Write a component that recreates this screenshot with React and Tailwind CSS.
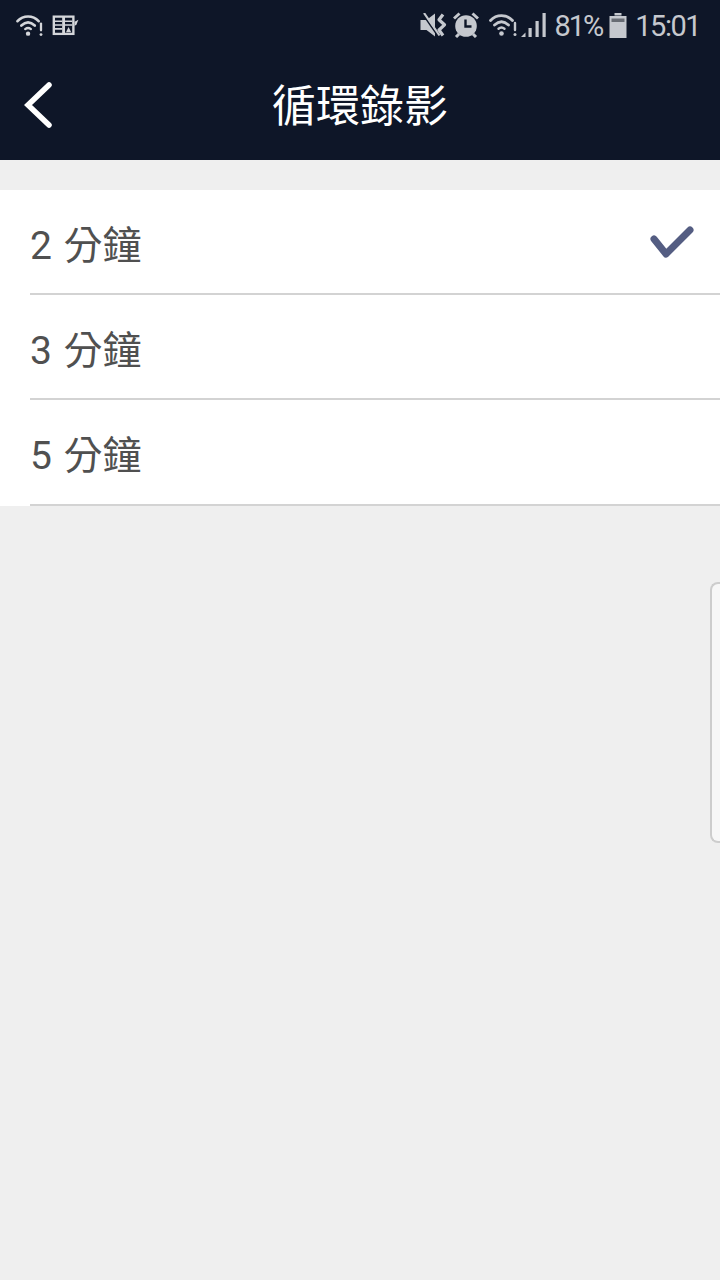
const cjk = { fontFamily: '"Roboto", "Noto Sans CJK TC", sans-serif' }

const options = [
  { label: '2 分鐘', checked: true },
  { label: '3 分鐘' },
  { label: '5 分鐘' },
]

function WifiAlert({ className }) {
  return (
    <svg className={className} viewBox="0 0 28 24" fill="none" stroke="currentColor" strokeLinecap="round">
      <path d="M1.5 7.5C7.5 1 17.5 1 23.5 7.5" strokeWidth="2.8" />
      <path d="M5.5 12C10 7.8 15 7.8 19.5 12" strokeWidth="2.8" />
      <path d="M9.5 15.8C11.5 14.2 13.5 14.2 15.5 15.8" strokeWidth="2.4" />
      <circle cx="12.5" cy="20.5" r="2.3" fill="currentColor" stroke="none" />
      <path d="M26 10V17" strokeWidth="2.4" />
      <circle cx="26" cy="21.5" r="1.5" fill="currentColor" stroke="none" />
    </svg>
  )
}

function NewsIcon({ className }) {
  return (
    <svg className={className} viewBox="0 0 28 22" fill="none" stroke="currentColor">
      <rect x="0.5" y="0.5" width="23" height="20.5" fill="currentColor" stroke="none" />
      <path d="M3 3H10.5V18.5H3ZM13.5 3H21V18.5H13.5Z" fill="#0e1628" stroke="none" />
      <path d="M3 6.5H10.5M3 10.5H10.5M3 14.5H10.5M13.5 6.5H21M13.5 10.5H21" strokeWidth="1.7" />
      <path d="M14.5 18L17.2 12.5L20 18Z" fill="currentColor" stroke="none" />
      <path d="M23.5 7L27.5 5L25.5 10L23.5 11.5Z" fill="currentColor" stroke="none" />
    </svg>
  )
}

function MuteVibrate({ className }) {
  return (
    <svg className={className} viewBox="0 0 27 24" fill="none" stroke="currentColor">
      <path d="M0.5 7H6.5L15 0.5V23.5L6.5 17H0.5Z" fill="currentColor" stroke="none" />
      <path d="M2 0L18 23" stroke="#0e1628" strokeWidth="1.8" />
      <path d="M4 0L19.5 22.5" strokeWidth="2.2" />
      <path d="M23 1.5L19 6.8L24.5 11.8L19 17L23 22.5" strokeWidth="3.2" strokeLinejoin="round" />
    </svg>
  )
}

function AlarmIcon({ className }) {
  return (
    <svg className={className} viewBox="0 0 26 26" fill="none">
      <circle cx="13" cy="14" r="10.8" fill="currentColor" />
      <path d="M12.5 7.5V14.5H18.5" stroke="#0e1628" strokeWidth="2.4" />
      <path d="M1 6.5L6.5 1.5M25 6.5L19.5 1.5M6 22L3 25M20 22L23 25" stroke="currentColor" strokeWidth="3" />
    </svg>
  )
}

function SignalIcon({ className }) {
  return (
    <svg className={className} viewBox="0 0 25 24" fill="currentColor">
      <path d="M0 24H4.5V19.5Z" />
      <rect x="7.5" y="15" width="3.2" height="9" />
      <rect x="14.5" y="8" width="3.2" height="16" />
      <rect x="21.5" y="0" width="3.2" height="24" />
    </svg>
  )
}

function BatteryIcon({ className }) {
  return (
    <svg className={className} viewBox="0 0 18 25" fill="currentColor">
      <path d="M5.5 0H12.5V2.5H5.5Z" />
      <path d="M0.5 3H17.5V25H0.5Z" />
      <rect x="2.5" y="5.5" width="13" height="3.5" fill="#686c74" />
    </svg>
  )
}

export default function App() {
  return (
    <div className="relative min-h-[1280px] bg-[#efefef] overflow-hidden" style={cjk}>
      <div className="bg-[#0e1628] h-40">
        <div className="flex items-center justify-between h-[50px] pl-4 pr-5 text-[#c5c8ce]">
          <div className="flex items-center gap-[9px] text-[#d4d6da]">
            <WifiAlert className="w-[27px] h-[23px]" />
            <NewsIcon className="w-[27px] h-[21px]" />
          </div>
          <div className="flex items-center">
            <MuteVibrate className="w-[27px] h-[24px]" />
            <AlarmIcon className="w-[26px] h-[26px] ml-[6px]" />
            <WifiAlert className="w-[28px] h-[24px] ml-[10px]" />
            <SignalIcon className="w-[25px] h-[24px] ml-[4px]" />
            <span className="text-[29px] leading-none ml-[8px] tracking-[-2px] translate-y-px">81%</span>
            <BatteryIcon className="w-[18px] h-[25px] ml-[7px]" />
            <span className="text-[29px] leading-none ml-[8px] tracking-[-1.5px] translate-y-px">15:01</span>
          </div>
        </div>
        <div className="grid grid-cols-[1fr_auto_1fr] items-center h-[110px] pl-[22px]">
          <svg className="w-[30px] h-[46px]" viewBox="0 0 30 46" fill="none" stroke="#ffffff" strokeWidth="5.5" strokeLinecap="round" strokeLinejoin="miter">
            <path d="M27 3L6 23L27 43" />
          </svg>
          <h1 className="text-[44px] leading-none text-white font-normal -translate-x-[11px] translate-y-[2px]">循環錄影</h1>
          <div />
        </div>
      </div>

      <ul className="mt-[30px] bg-white h-[316px] -mb-px">
        {options.map((opt) => (
          <li key={opt.label} className="pl-[30px] h-[105px] last:h-[106px]">
            <div className="flex items-center justify-between h-full pr-[26px] border-b-2 border-[#d3d3d3] text-[#505050] text-[39px] leading-none">
              <span className="pt-[9px] [word-spacing:2px]">{opt.label}</span>
              {opt.checked && (
                <svg className="w-[44px] h-[36px]" viewBox="0 0 44 36" fill="none" stroke="#545d82" strokeWidth="7" strokeLinecap="round" strokeLinejoin="round">
                  <path d="M4 15L16 30L40 6" />
                </svg>
              )}
            </div>
          </li>
        ))}
      </ul>

      {/* edge panel handle */}
      <div className="absolute left-[710px] top-[582px] w-3 h-[261px] rounded-l-lg border-2 border-r-0 border-[#cdcdcd] bg-[#f7f7f7]" />
    </div>
  )
}
